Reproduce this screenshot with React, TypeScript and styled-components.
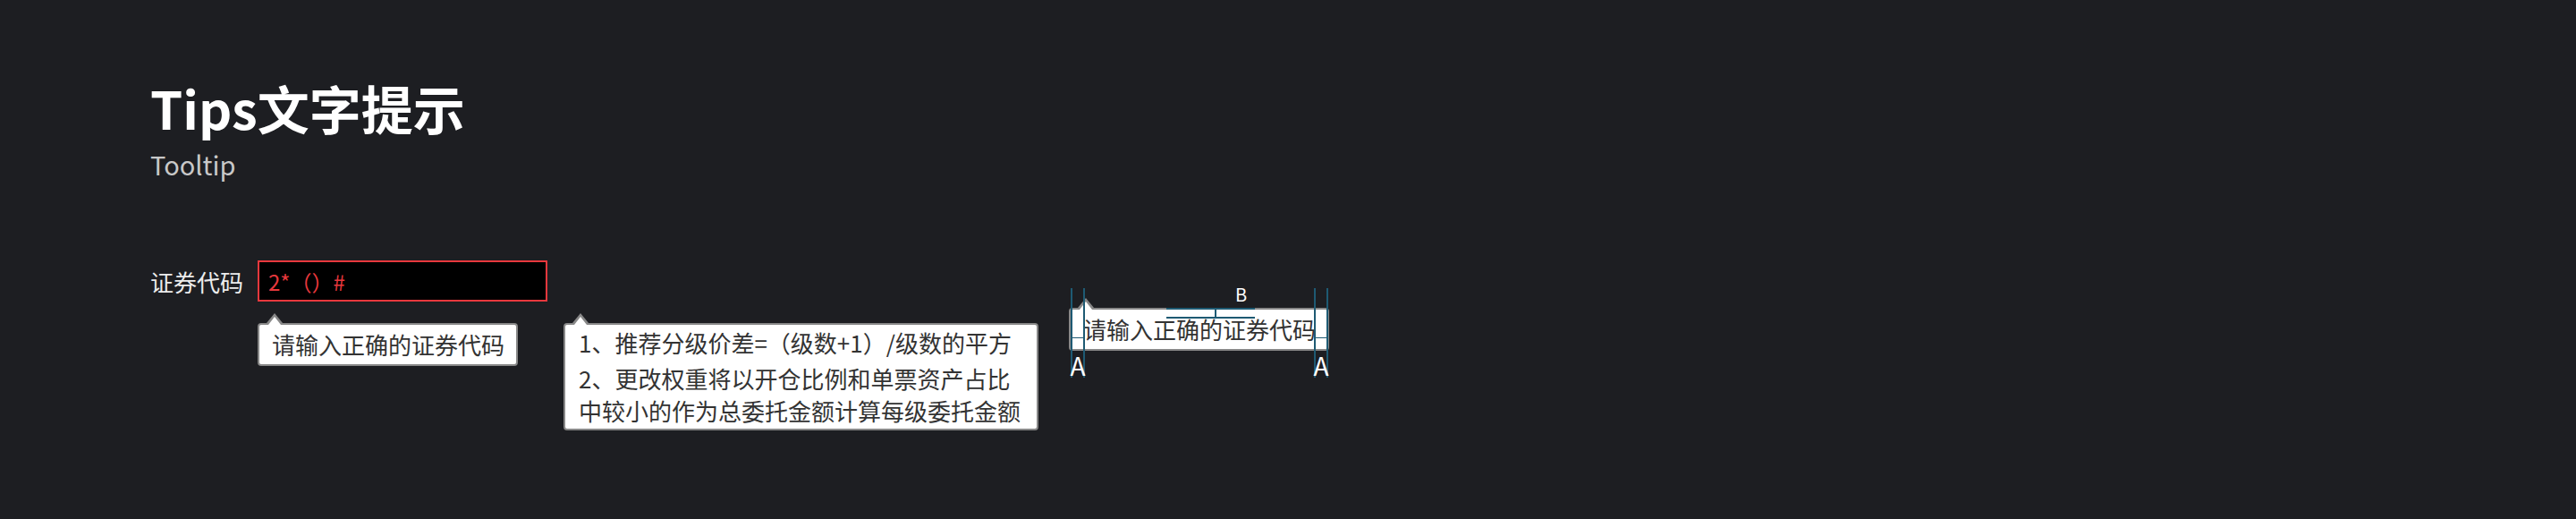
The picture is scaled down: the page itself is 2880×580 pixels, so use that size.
import React from 'react';
import styled, { createGlobalStyle } from 'styled-components';

const Global = createGlobalStyle`
  html, body { margin: 0; padding: 0; background: #1d1e22; }
  body { font-family: "Noto Sans CJK SC", "Noto Sans", sans-serif; }
`;

const TEAL = '#1e5a73';

const Page = styled.div`
  width: 2880px;
  height: 580px;
  box-sizing: border-box;
  padding: 85px 0 0 168px;
  background: #1d1e22;
`;

const Title = styled.h1`
  margin: 0;
  font-size: 58px;
  line-height: 70px;
  font-weight: 700;
  color: #ffffff;
`;

const Subtitle = styled.div`
  margin-top: 11px;
  font-size: 29px;
  line-height: 34px;
  color: #c8c8c8;
`;

const Row = styled.div`
  display: flex;
  align-items: flex-start;
  margin-top: 91px;
`;

const Field = styled.div`
  display: flex;
  align-items: flex-start;
`;

const Label = styled.label`
  width: 120px;
  height: 46px;
  display: flex;
  align-items: center;
  font-size: 26px;
  color: #ececec;
`;

const Col = styled.div`
  display: flex;
  flex-direction: column;
`;

const Input = styled.input`
  width: 324px;
  height: 46px;
  box-sizing: border-box;
  border: 2px solid #e8383d;
  border-radius: 0;
  background: #000000;
  color: #e8383d;
  font-family: "Noto Sans CJK SC", "Noto Sans", sans-serif;
  font-size: 24px;
  padding: 0 0 0 10px;
  margin: 0;
  outline: none;
`;

const TipRow = styled.div`
  display: flex;
  align-items: flex-start;
  gap: 51px;
  margin-top: 24px;
`;

const Tip = styled.div<{ $wide?: boolean }>`
  position: relative;
  box-sizing: border-box;
  background: #ffffff;
  border: 2px solid #888888;
  border-radius: 4px;
  color: #333333;
  white-space: nowrap;
  font-size: 26px;
  ${(p) =>
    p.$wide
      ? `
    width: 531px;
    padding: 2px 15px;
    line-height: 36px;
  `
      : `
    width: 291px;
    height: 48px;
    padding: 0 0 0 14px;
    line-height: 44px;
  `}
  &::before {
    content: '';
    position: absolute;
    left: 8px;
    top: -13px;
    border-style: solid;
    border-width: 0 9px 11px 9px;
    border-color: transparent transparent #888888 transparent;
  }
  &::after {
    content: '';
    position: absolute;
    left: 10px;
    top: -9px;
    border-style: solid;
    border-width: 0 7px 9px 7px;
    border-color: transparent transparent #ffffff transparent;
  }
`;

const Para = styled.div<{ $gap?: boolean }>`
  margin-bottom: ${(p) => (p.$gap ? '4px' : '0')};
`;

/* annotated spec diagram: layers stacked in one grid cell */
const Diagram = styled.div`
  display: grid;
  width: 291px;
  height: 100px;
  margin-left: 34px;
  margin-top: 31px;
  & > * {
    grid-area: 1 / 1;
  }
`;

const BoxLayer = styled.div`
  padding-top: 22px;
`;

const OverLayer = styled.div`
  position: relative;
  z-index: 1;
  pointer-events: none;
`;

const MarkerLayer = styled(OverLayer)`
  display: flex;
  justify-content: space-between;
  padding: 0 1px 0 2px;
`;

const Marker = styled.div`
  width: 16px;
  height: 100px;
  box-sizing: border-box;
  border-left: 2px solid ${TEAL};
  border-right: 2px solid ${TEAL};
  display: flex;
  flex-direction: column;
  align-items: center;
`;

const Connector = styled.div`
  align-self: stretch;
  height: 2px;
  margin: 55px 0 0;
  background: ${TEAL};
`;

const MarkLabel = styled.div<{ $size: number }>`
  font-size: ${(p) => p.$size}px;
  line-height: ${(p) => p.$size}px;
  color: #ffffff;
`;

const ALabel = styled(MarkLabel)`
  margin-top: 16px;
  width: 20px;
  text-align: center;
`;

const BracketLayer = styled(OverLayer)`
  display: flex;
  flex-direction: column;
  align-items: flex-start;
  padding-left: 109px;
`;

const BLabel = styled(MarkLabel)`
  line-height: 14px;
  margin-left: 77px;
`;

const Bracket = styled.div`
  position: relative;
  width: 99px;
  height: 12px;
  margin-top: 8px;
  box-sizing: border-box;
  border-top: 2px solid ${TEAL};
  border-bottom: 2px solid ${TEAL};
  &::after {
    content: '';
    position: absolute;
    left: 54px;
    top: 0;
    width: 2px;
    height: 100%;
    background: ${TEAL};
  }
`;

export default function App() {
  return (
    <>
      <Global />
      <Page>
        <Title>Tips文字提示</Title>
        <Subtitle>Tooltip</Subtitle>
        <Row>
          <Field>
            <Label>证券代码</Label>
            <Col>
              <Input defaultValue="2*（）#" readOnly />
              <TipRow>
                <Tip>请输入正确的证券代码</Tip>
                <Tip $wide>
                  <Para $gap>1、推荐分级价差=（级数+1）/级数的平方</Para>
                  <Para>2、更改权重将以开仓比例和单票资产占比</Para>
                  <Para>中较小的作为总委托金额计算每级委托金额</Para>
                </Tip>
              </TipRow>
            </Col>
          </Field>
          <Diagram>
            <BoxLayer>
              <Tip>请输入正确的证券代码</Tip>
            </BoxLayer>
            <MarkerLayer>
              {[0, 1].map((i) => (
                <Marker key={i}>
                  <Connector />
                  <ALabel $size={28}>A</ALabel>
                </Marker>
              ))}
            </MarkerLayer>
            <BracketLayer>
              <BLabel $size={20}>B</BLabel>
              <Bracket />
            </BracketLayer>
          </Diagram>
        </Row>
      </Page>
    </>
  );
}
